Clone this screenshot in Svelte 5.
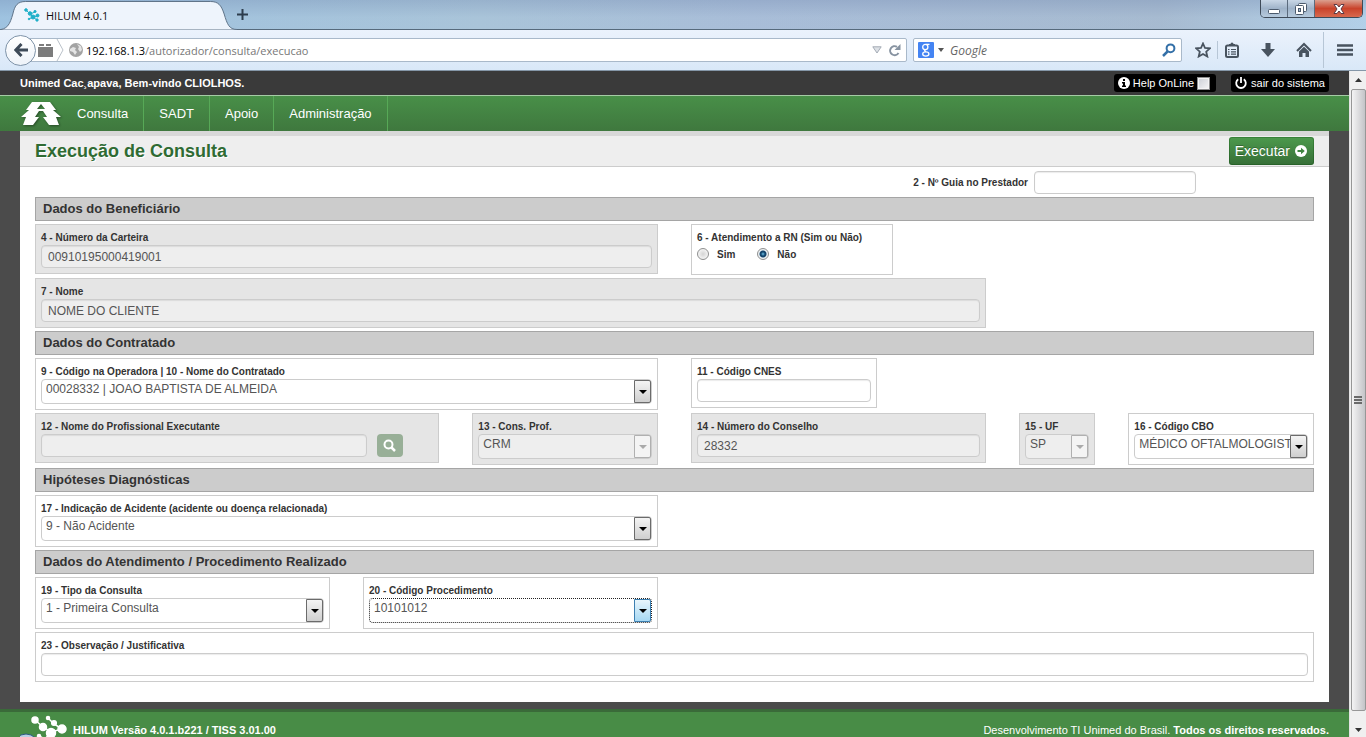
<script>
  const MENU = ['Consulta', 'SADT', 'Apoio', 'Administração'];

  let guia = $state('');
  let rn = $state('nao');
  let cnes = $state('');
  let obs = $state('');
  let help = $state(false);
</script>

{#snippet textField(id, label, span, value, disabled)}
  <div class="field {span}" class:off={disabled}>
    <label for={id}>{label}</label>
    <input class="text" type="text" {id} {value} {disabled} />
  </div>
{/snippet}

{#snippet selectField(id, label, span, value, disabled, focused)}
  <div class="field {span}" class:off={disabled}>
    <label for={id}>{label}</label>
    <div class="select" class:focused>
      <select {id} {disabled}>
        <option>{value}</option>
      </select>
      <span class="arrow"></span>
    </div>
  </div>
{/snippet}

<div class="window">
  <header class="titlebar">
    <div class="tab">
      <svg class="tab-shape" viewBox="0 0 240 30" preserveAspectRatio="none">
        <path d="M-4 30C8 30 10 24 13 14C15 5 18 1.500 26 1.500H213C221 1.500 224 5 227 14C230 24 232 29.500 240 29.500V30Z" fill="#eef4fc" stroke="#5f7388" />
      </svg>
      <svg class="favicon" viewBox="0 0 16 16" fill="#1fb0c9" stroke="#1fb0c9">
        <path d="M2 3L6 7L9 10L13 9M6 7L11 5M9 10L13 13M9 10L5 12" fill="none" />
        <circle cx="2" cy="3" r="1.300" /><circle cx="6" cy="6.500" r="1.800" /><circle cx="11" cy="4.500" r="1.100" />
        <circle cx="9" cy="10" r="2" /><circle cx="13.500" cy="8.500" r="1.500" /><circle cx="13" cy="13" r="1.200" /><circle cx="5" cy="12" r=".8" />
      </svg>
      <span>HILUM 4.0.1</span>
    </div>
    <button class="new-tab" aria-label="Nova aba">
      <svg viewBox="0 0 11 11"><path d="M5.500 0V11M0 5.500H11" stroke="#2d3d4d" stroke-width="2" /></svg>
    </button>
    <div class="win-buttons">
      <button class="min" aria-label="Minimizar">
        <svg viewBox="0 0 14 12"><rect x="1.500" y="6.500" width="11" height="4" rx="1" fill="#fff" stroke="#4b5a6c" /></svg>
      </button>
      <button class="max" aria-label="Restaurar">
        <svg viewBox="0 0 14 12" fill="#fff" stroke="#4b5a6c">
          <rect x="4.500" y=".5" width="8" height="8" rx="1" /><rect x="1.500" y="2.500" width="8" height="9" rx="1" /><rect x="4.500" y="5.500" width="2" height="3" fill="#a8bdd4" />
        </svg>
      </button>
      <button class="close" aria-label="Fechar">
        <svg viewBox="0 0 14 12">
          <path d="M2 1.500H5L7 4L9 1.500H12L9 6L12 10.500H9L7 8L5 10.500H2L5 6Z" fill="#fff" stroke="#5c3a44" />
        </svg>
      </button>
    </div>
  </header>

  <div class="toolbar">
    <button class="back" aria-label="Voltar">
      <svg viewBox="0 0 14 14"><path d="M7.500 1L1.800 7L7.500 13M2 7H14" fill="none" stroke="#3d4a58" stroke-width="3" /></svg>
    </button>
    <div class="urlbar">
      <svg class="brick" viewBox="0 0 15 13" fill="#7c7c7c"><path d="M0 3H15V13H0ZM1 0H6V2H1ZM8 0H13V2H8Z" /></svg>
      <svg class="chevron" viewBox="0 0 8 22"><path d="M1 0L7 11L1 22" fill="none" stroke="#b9c0c8" /></svg>
      <svg class="globe" viewBox="0 0 14 14">
        <circle cx="7" cy="7" r="7" fill="#a3a3a3" />
        <path d="M1 6L4 4L7 5L6 7L8 9L6 12L4 9L1 8ZM8 1L12 3L13 7L11 9L9 6L10 4Z" fill="#e4e4e4" />
      </svg>
      <div class="url" role="textbox" tabindex="0" aria-label="Endereço" contenteditable="true"><b>192.168.1.3</b>/autorizador/consulta/execucao</div>
      <svg class="drop" viewBox="0 0 10 8"><path d="M.8 .8H9.200L5 7Z" fill="#dde1e6" stroke="#a4abb5" /></svg>
      <svg class="reload" viewBox="0 0 13 13">
        <path d="M10.500 9A4.500 4.500 0 1 1 9 2.800" fill="none" stroke="#8793a1" stroke-width="2" /><path d="M12.500 0V6H6.500Z" fill="#8793a1" />
      </svg>
    </div>
    <div class="search">
      <svg class="google" viewBox="0 0 16 16">
        <rect width="16" height="16" rx="1" fill="#4484f3" />
        <g fill="none" stroke="#fff" stroke-width="1.300"><circle cx="7.300" cy="5" r="2.600" /><path d="M8 2.400H11.500M8 7.600C5.500 8.500 6.500 9.500 8 9.700" /><ellipse cx="7.800" cy="12" rx="3.100" ry="2.100" /></g>
      </svg>
      <svg class="caret" viewBox="0 0 6 4"><path d="M0 0H6L3 4Z" fill="#555" /></svg>
      <input type="text" placeholder="Google" aria-label="Pesquisar" />
      <svg class="lens" viewBox="0 0 14 14"><circle cx="8.500" cy="5.300" r="3.900" fill="none" stroke="#3470a8" stroke-width="2" /><path d="M5.500 8.500L1 13" stroke="#3470a8" stroke-width="2.500" /></svg>
    </div>
    <div class="tools">
      <button aria-label="Favoritos">
        <svg viewBox="0 0 16 16"><path d="M8 1.500L10 6L14.800 6.400L11.200 9.700L12.300 14.500L8 12L3.700 14.500L4.800 9.700L1.200 6.400L6 6Z" fill="none" stroke="#48535f" stroke-width="1.800" /></svg>
      </button>
      <i class="sep"></i>
      <button aria-label="Lista">
        <svg viewBox="0 0 16 16"><rect x="2" y="3.500" width="12" height="11.500" rx="1.500" fill="none" stroke="#48535f" stroke-width="2" /><path d="M5 4V2H6.500A1.500 1.500 0 0 1 9.500 2H11V4Z" fill="#48535f" /><path d="M4 7.500H5.500M7 7.500H12M4 9.800H5.500M7 9.800H12M4 12.200H5.500M7 12.200H12" stroke="#48535f" stroke-width="1.200" /></svg>
      </button>
      <button aria-label="Downloads">
        <svg viewBox="0 0 16 16"><path d="M5.500 1H10.500V7H15L8 15L1 7H5.500Z" fill="#48535f" /></svg>
      </button>
      <button aria-label="Início">
        <svg viewBox="0 0 16 16"><path d="M1 9L8 2L15 9" fill="none" stroke="#48535f" stroke-width="2" /><path d="M3 9.500L8 4.800L13 9.500V15H9.500V11H6.500V15H3Z" fill="#48535f" /></svg>
      </button>
      <i class="sep tall"></i>
      <button aria-label="Menu">
        <svg viewBox="0 0 16 16"><path d="M0 3.500H16M0 8H16M0 12.500H16" stroke="#48535f" stroke-width="2.500" /></svg>
      </button>
    </div>
  </div>

  <div class="viewport">
    <div class="page">
      <div class="userbar">
        <strong>Unimed Cac¸apava, Bem-vindo CLIOLHOS.</strong>
        <label class="pill">
          <svg viewBox="0 0 12 12"><circle cx="6" cy="6" r="6" fill="#fff" /><path d="M5 2H7V4H5ZM4 5H7V8.500H8V10H4V8.500H5V6.500H4Z" fill="#000" /></svg>
          Help OnLine
          <input type="checkbox" bind:checked={help} />
        </label>
        <button class="pill">
          <svg viewBox="0 0 12 12" fill="none" stroke="#fff" stroke-width="1.800"><path d="M3.200 2.300A4.800 4.800 0 1 0 8.800 2.300M6 0V6" /></svg>
          sair do sistema
        </button>
      </div>

      <nav>
        <svg class="brand" viewBox="0 0 40 24" fill="#fff" fill-rule="evenodd">
          <path d="M11 0H29L35 8H32L40 15H35L38 23H28L22 15H26L22 9H18L14 15H18L12 23H2L5 15H0L8 8H5ZM20 2L16 7H24Z" />
        </svg>
        {#each MENU as item}
          <a href="#menu">{item}</a>
        {/each}
      </nav>

      <main>
        <div class="heading">
          <h1>Execução de Consulta</h1>
          <button class="run">
            Executar
            <svg viewBox="0 0 12 12"><circle cx="6" cy="6" r="6" fill="#fff" /><path d="M2.500 5H6V2.800L9.800 6L6 9.200V7H2.500Z" fill="#3f8540" /></svg>
          </button>
        </div>

        <form>
          <div class="guia">
            <label for="guia">2 - Nº Guia no Prestador</label>
            <input class="text" type="text" id="guia" bind:value={guia} />
          </div>

          <h2>Dados do Beneficiário</h2>
          <div class="row">
            {@render textField('carteira', '4 - Número da Carteira', 's6', '00910195000419001', true)}
            <fieldset class="field s2 rn">
              <legend>6 - Atendimento a RN (Sim ou Não)</legend>
              <div class="radios">
                <label><input type="radio" name="rn" value="sim" bind:group={rn} />Sim</label>
                <label><input type="radio" name="rn" value="nao" bind:group={rn} />Não</label>
              </div>
            </fieldset>
          </div>
          <div class="row">
            {@render textField('nome', '7 - Nome', 's9', 'NOME DO CLIENTE', true)}
          </div>

          <h2>Dados do Contratado</h2>
          <div class="row">
            {@render selectField('operadora', '9 - Código na Operadora | 10 - Nome do Contratado', 's6', '00028332 | JOAO BAPTISTA DE ALMEIDA')}
            <div class="field s2">
              <label for="cnes">11 - Código CNES</label>
              <input class="text" type="text" id="cnes" bind:value={cnes} />
            </div>
          </div>
          <div class="row">
            <div class="field s4 off">
              <label for="profissional">12 - Nome do Profissional Executante</label>
              <div class="lookup">
                <input class="text" type="text" id="profissional" disabled />
                <button type="button" disabled aria-label="Pesquisar profissional">
                  <svg viewBox="0 0 13 13" fill="none" stroke="#fff"><circle cx="5.500" cy="5.500" r="4" stroke-width="2" /><path d="M8.500 8.500L12 12" stroke-width="2.500" /></svg>
                </button>
              </div>
            </div>
            {@render selectField('conselho', '13 - Cons. Prof.', 's2', 'CRM', true)}
            {@render textField('numero', '14 - Número do Conselho', 's3', '28332', true)}
            {@render selectField('uf', '15 - UF', 's1', 'SP', true)}
            {@render selectField('cbo', '16 - Código CBO', 's2', 'MÉDICO OFTALMOLOGISTA')}
          </div>

          <h2>Hipóteses Diagnósticas</h2>
          <div class="row">
            {@render selectField('acidente', '17 - Indicação de Acidente (acidente ou doença relacionada)', 's6', '9 - Não Acidente')}
          </div>

          <h2>Dados do Atendimento / Procedimento Realizado</h2>
          <div class="row">
            {@render selectField('tipo', '19 - Tipo da Consulta', 's3', '1 - Primeira Consulta')}
            {@render selectField('procedimento', '20 - Código Procedimento', 's3', '10101012', false, true)}
          </div>
          <div class="row">
            <div class="field s12">
              <label for="obs">23 - Observação / Justificativa</label>
              <input class="text" type="text" id="obs" bind:value={obs} />
            </div>
          </div>
        </form>
      </main>

      <footer>
        <svg class="molecule" viewBox="0 0 50 36">
          <g fill="#fff" stroke="#fff" stroke-width="1.500">
            <path d="M15 7L23 14L31 19L42 16M28 5L34 11L42 16M31 19L25 26L19 23" fill="none" />
            <circle cx="15" cy="7" r="3" /><circle cx="23" cy="14" r="3.500" /><circle cx="28" cy="5" r="1.500" /><circle cx="34" cy="10" r="2.300" />
            <circle cx="42" cy="16" r="4" /><circle cx="31" cy="20" r="4.500" /><circle cx="19" cy="23" r="1.500" />
          </g>
          <circle cx="6" cy="34" r="13" fill="#b9cfe4" stroke="#2c5a80" />
        </svg>
        <strong>HILUM Versão 4.0.1.b221 / TISS 3.01.00</strong>
        <p>Desenvolvimento TI Unimed do Brasil. <strong>Todos os direitos reservados.</strong></p>
      </footer>
    </div>

    <div class="scrollbar">
      <svg class="up" viewBox="0 0 7 4"><path d="M0 4H7L3.500 0Z" fill="#333" /></svg>
      <div class="thumb"><i></i><i></i><i></i></div>
      <svg class="down" viewBox="0 0 7 4"><path d="M0 0H7L3.500 4Z" fill="#333" /></svg>
    </div>
  </div>
</div>

<style>
  :global(body) {
    background: #4b4b4b;
    overflow: hidden;
  }

  .window {
    height: 100vh;
    display: flex;
    flex-direction: column;
    font-family: "Liberation Sans", Arial, sans-serif;
    font-size: 13px;
    color: #333;
  }

  .window * {
    box-sizing: border-box;
  }

  svg {
    display: block;
    flex: none;
  }

  button {
    font-family: inherit;
    padding: 0;
    border: 0;
    background: none;
    cursor: pointer;
  }

  .titlebar {
    flex: none;
    height: 30px;
    display: flex;
    background:
      linear-gradient(rgba(120, 140, 175, 0.35), rgba(170, 185, 200, 0.15) 60%),
      linear-gradient(90deg, #9cc4e4, #a9c6dc 35%, #a8bedb 55%, #a6bbd2 85%, #b4d4ee);
    border-bottom: 1px solid #566a7c;
    font-family: "Open Sans", sans-serif;
    font-size: 11px;
    color: #111;
  }

  .tab {
    position: relative;
    width: 237px;
    height: 30px;
    display: flex;
    align-items: center;
    gap: 6px;
    padding-left: 24px;
  }

  .tab-shape {
    position: absolute;
    inset: 0;
    width: 100%;
    height: 100%;
  }

  .tab span,
  .favicon {
    position: relative;
  }

  .favicon {
    width: 16px;
    height: 16px;
  }

  .new-tab svg {
    width: 11px;
    height: 11px;
  }

  .win-buttons {
    margin: 0 3px 0 auto;
    height: 18px;
    display: flex;
    border: 1px solid #3e4a58;
    border-top: 0;
    border-radius: 0 0 5px 5px;
    overflow: hidden;
  }

  .win-buttons button {
    width: 27px;
    display: flex;
    align-items: center;
    justify-content: center;
    background: linear-gradient(#c9d7e6, #9fb3c9 50%, #b6cadd);
    border-right: 1px solid #5b6b7d;
  }

  .win-buttons .close {
    width: 47px;
    background: linear-gradient(#dba08f, #c9432b 50%, #d8694e);
    border: 0;
  }

  .win-buttons svg {
    width: 14px;
    height: 12px;
  }

  .toolbar {
    flex: none;
    height: 41px;
    display: flex;
    align-items: center;
    padding: 0 13px 0 5px;
    background: linear-gradient(#ebf2fc, #d9e8f8);
    border-bottom: 1px solid #8597a8;
    font-family: "Open Sans", sans-serif;
    font-size: 11px;
  }

  .back {
    position: relative;
    flex: none;
    width: 31px;
    height: 31px;
    display: flex;
    align-items: center;
    justify-content: center;
    background: linear-gradient(#fff, #eef3f9);
    border: 1px solid #7f93a8;
    border-radius: 50%;
  }

  .back svg {
    width: 14px;
    height: 14px;
  }

  .urlbar,
  .search {
    height: 24px;
    display: flex;
    align-items: center;
    background: #fff;
    border: 1px solid #a9b9ca;
    border-radius: 2px;
  }

  .urlbar {
    flex: 1;
    margin-left: -8px;
    padding: 0 5px 0 9px;
  }

  .brick {
    width: 15px;
    height: 13px;
  }

  .chevron {
    width: 8px;
    height: 22px;
    margin: 0 5px 0 3px;
  }

  .globe {
    width: 14px;
    height: 14px;
  }

  .url {
    flex: 1;
    margin-left: 3px;
    color: #777;
    white-space: nowrap;
    outline: 0;
  }

  .url b {
    font-weight: 400;
    color: #000;
  }

  .drop {
    width: 10px;
    height: 8px;
    margin-right: 6px;
  }

  .reload {
    width: 13px;
    height: 13px;
  }

  .search {
    width: 269px;
    margin-left: 6px;
    padding: 0 5px 0 4px;
  }

  .google {
    width: 16px;
    height: 16px;
  }

  .caret {
    width: 6px;
    height: 4px;
    margin: 0 6px 0 4px;
  }

  .search input {
    flex: 1;
    min-width: 0;
    padding: 0;
    border: 0;
    outline: 0;
    background: none;
    font: italic 12px "Open Sans", sans-serif;
  }

  .search input::placeholder {
    color: #666;
  }

  .lens {
    width: 14px;
    height: 14px;
  }

  .tools {
    display: flex;
    align-items: center;
    margin-left: 13px;
  }

  .tools svg {
    width: 16px;
    height: 16px;
  }

  .tools button + button {
    margin-left: 20px;
  }

  .sep {
    width: 1px;
    height: 18px;
    margin: 0 6px;
    background: #b7c6d6;
  }

  .sep.tall {
    height: 36px;
    margin: 0 13px 0 11px;
  }

  .viewport {
    flex: 1;
    min-height: 0;
    display: flex;
  }

  .page {
    flex: 1;
    min-width: 0;
    overflow: hidden;
    background: #4b4b4b;
  }

  .userbar {
    height: 24px;
    display: flex;
    align-items: center;
    padding: 0 20px;
    background: #3a3a3a;
    color: #fff;
    font-size: 11px;
  }

  .userbar strong {
    flex: 1;
  }

  .pill {
    height: 18px;
    display: flex;
    align-items: center;
    gap: 4px;
    padding: 0 4px;
    background: #000;
    border-radius: 3px;
    color: #fff;
    font-size: 11px;
  }

  label.pill {
    margin-right: 15px;
    padding-right: 6px;
    gap: 3px;
  }

  .pill svg {
    width: 12px;
    height: 12px;
  }

  .pill input {
    appearance: none;
    width: 13px;
    height: 13px;
    margin: 0;
    background: linear-gradient(135deg, #cbcfd5, #f6f6f6);
    border: 1px solid #8e8f8f;
    box-shadow: inset 0 0 0 1px #f4f4f4;
  }

  nav {
    height: 36px;
    display: flex;
    align-items: center;
    padding-left: 21px;
    background: linear-gradient(#488f48, #3f783e);
    border-top: 1px solid #a5cba5;
  }

  .brand {
    width: 40px;
    height: 24px;
    margin-right: 1px;
    filter: drop-shadow(1px 1px 1px rgba(0, 0, 0, 0.4));
  }

  nav a {
    height: 35px;
    padding: 0 15px;
    border-right: 1px solid #57a957;
    color: #fff;
    font-size: 13px;
    line-height: 35px;
    text-decoration: none;
  }

  main {
    margin: 0 20px;
    background: #fff;
  }

  .heading {
    height: 36px;
    display: flex;
    align-items: center;
    justify-content: space-between;
    padding: 5px 15px 1px;
    background: linear-gradient(#d8d8d8 5px, #eee 5px);
    border-bottom: 1px solid #ccc;
  }

  h1 {
    margin: 0;
    font-size: 18px;
    line-height: 30px;
    color: #2f6b33;
    text-shadow: 1px 1px 0 #fff;
  }

  .run {
    height: 28px;
    display: flex;
    align-items: center;
    gap: 5px;
    padding: 0 7px 0 6px;
    background: linear-gradient(#4d9a4d, #366f37);
    border-radius: 3px;
    box-shadow: inset 0 0 0 1px rgba(0, 60, 0, 0.25);
    color: #fff;
    font-size: 14px;
    text-shadow: 0 -1px 0 rgba(0, 0, 0, 0.25);
  }

  .run svg {
    width: 12px;
    height: 12px;
  }

  form {
    display: flex;
    flex-direction: column;
    gap: 3px;
    padding: 4px 15px 20px;
  }

  .guia {
    height: 23px;
    display: flex;
    align-items: center;
    justify-content: flex-end;
    gap: 6px;
    padding-right: 118px;
    font-size: 10px;
    font-weight: bold;
  }

  .guia .text {
    width: 162px;
  }

  h2 {
    height: 24px;
    margin: 0;
    padding-left: 7px;
    background: #ccc;
    border: 1px solid #a5a5a5;
    font-size: 13px;
    line-height: 22px;
  }

  .row {
    display: grid;
    grid-template-columns: repeat(12, minmax(0, 1fr));
    column-gap: 33px;
    align-items: start;
  }

  .s1 { grid-column: span 1; }
  .s2 { grid-column: span 2; }
  .s3 { grid-column: span 3; }
  .s4 { grid-column: span 4; }
  .s6 { grid-column: span 6; }
  .s9 { grid-column: span 9; }
  .s12 { grid-column: span 12; }

  .field {
    margin: 0;
    padding: 5px;
    border: 1px solid #ccc;
    font-size: 10px;
    font-weight: bold;
  }

  .field > label,
  legend {
    display: block;
    padding: 0;
    line-height: 15px;
    white-space: nowrap;
  }

  .off {
    background: #e5e5e5;
  }

  .text {
    display: block;
    width: 100%;
    height: 23px;
    padding: 0 6px;
    border: 1px solid #ccc;
    border-radius: 4px;
    box-shadow: inset 0 1px 1px rgba(0, 0, 0, 0.08);
    background: #fff;
    color: #555;
    font: 12px "Liberation Sans", Arial, sans-serif;
  }

  .off .text,
  .off select {
    background: #eee;
    color: #555;
    opacity: 1;
  }

  .rn {
    min-width: 202px;
  }

  .rn legend {
    float: left;
    width: 100%;
  }

  .radios {
    clear: both;
    height: 24px;
    display: flex;
    gap: 22px;
  }

  .radios label {
    height: 18px;
    display: flex;
    align-items: center;
    gap: 8px;
  }

  .radios input {
    appearance: none;
    width: 12px;
    height: 12px;
    margin: 0;
    border: 1px solid #8e8f8f;
    border-radius: 50%;
    background: radial-gradient(circle, #d4d4d4, #f4f4f4 70%);
  }

  .radios input:checked {
    background: radial-gradient(circle at 50% 50%, #6fc6ec 0, #14466e 2px, #14466e 3px, #eef2f4 4px);
  }

  .select {
    position: relative;
  }

  select {
    appearance: none;
    display: block;
    width: 100%;
    height: 25px;
    padding: 0 17px 5px 4px;
    border: 1px solid #ccc;
    border-radius: 4px;
    outline: 0;
    background: #fff;
    color: #555;
    font: 12px "Liberation Sans", Arial, sans-serif;
  }

  .arrow {
    position: absolute;
    top: 1px;
    right: 1px;
    bottom: 1px;
    width: 17px;
    display: grid;
    place-items: center;
    border: 1px solid #6b6b6b;
    border-radius: 0 2px 2px 0;
    background: linear-gradient(#f4f4f4, #cfcfcf);
    pointer-events: none;
  }

  .arrow::after {
    content: '';
    border: 4px solid transparent;
    border-top-color: #000;
    border-bottom: 0;
  }

  .off .arrow {
    background: #f4f4f4;
    border-color: #b0b0b0;
  }

  .off .arrow::after {
    border-top-color: #aaa;
  }

  .focused select {
    border: 1px dotted #222;
  }

  .focused .arrow {
    background: linear-gradient(#e8f5fc, #a6d8f3);
    border-color: #3c7fb1;
  }

  .lookup {
    display: flex;
    gap: 10px;
  }

  .lookup .text {
    width: 83%;
  }

  .lookup button {
    width: 26px;
    height: 23px;
    display: grid;
    place-items: center;
    background: #98af97;
    border-radius: 4px;
  }

  .lookup svg {
    width: 13px;
    height: 13px;
  }

  footer {
    height: 48px;
    margin-top: 7px;
    display: flex;
    align-items: flex-start;
    padding: 0 20px;
    background: #488c46;
    border-top: 3px solid #3a6a39;
    color: #fff;
    font-size: 11px;
    line-height: 36px;
  }

  .molecule {
    width: 50px;
    height: 36px;
    margin: 1px 3px 0 0;
  }

  footer p {
    margin: 0 0 0 auto;
  }

  .scrollbar {
    flex: none;
    width: 17px;
    display: flex;
    flex-direction: column;
    align-items: center;
    background: #f0f0f0;
    border-left: 1px solid #e3e3e3;
  }

  .scrollbar svg {
    width: 7px;
    height: 4px;
    margin: 7px 0;
  }

  .scrollbar .down {
    margin: 17px 0 5px;
  }

  .thumb {
    flex: 1;
    width: 15px;
    display: flex;
    flex-direction: column;
    align-items: center;
    justify-content: center;
    gap: 1px;
    background: linear-gradient(90deg, #f4f4f4, #dcdcde 50%, #c4c4c8);
    border: 1px solid #979797;
    border-radius: 2px;
  }

  .thumb i {
    width: 8px;
    height: 2px;
    background: #6a6a6a;
  }
</style>
